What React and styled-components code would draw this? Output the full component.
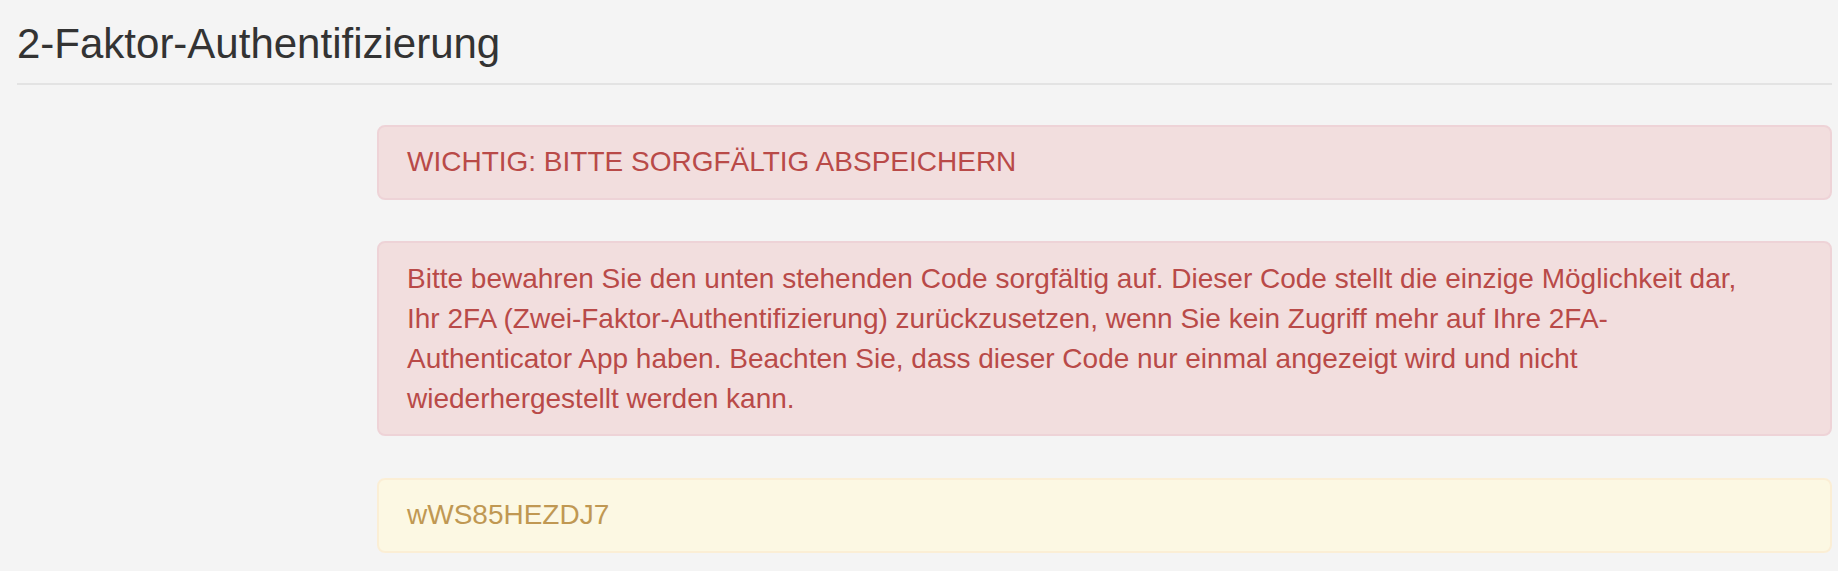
import React from 'react'
import styled, { createGlobalStyle } from 'styled-components'

const GlobalStyle = createGlobalStyle`
  html, body {
    margin: 0;
    padding: 0;
    background: #f4f4f4;
  }

  body {
    font-family: "Liberation Sans", Arial, Helvetica, sans-serif;
    font-size: 28px;
    line-height: 40px;
    color: #333333;
  }
`

const alertColors = {
  danger: { bg: '#f2dede', border: '#eed3d7', text: '#b94a48' },
  warning: { bg: '#fcf8e3', border: '#fbeed5', text: '#c09853' }
}

const PageStyled = styled.div`
  padding: 0 6px 0 17px;
`

const PageHeader = styled.h1`
  margin: 21px 0 0;
  padding-bottom: 15.5px;
  border-bottom: 2px solid #e3e3e3;
  font-size: 42px;
  font-weight: 400;
  line-height: 46px;
  color: #333333;
`

const Row = styled.div`
  display: grid;
  grid-template-columns: 360px 1fr;
  margin-top: 40px;
`

const Content = styled.div`
  grid-column: 2;
  display: flex;
  flex-direction: column;
  gap: 41.5px;
`

const Alert = styled.div`
  padding: 15.5px 70px 15.5px 28px;
  border: 2px solid ${p => alertColors[p.$variant].border};
  border-radius: 8px;
  background: ${p => alertColors[p.$variant].bg};
  color: ${p => alertColors[p.$variant].text};
  font-size: 28px;
  line-height: 40px;
`

const App = () => {
  return (
    <>
      <GlobalStyle />
      <PageStyled>
        <PageHeader>2-Faktor-Authentifizierung</PageHeader>
        <Row>
          <Content>
            <Alert $variant="danger">WICHTIG: BITTE SORGFÄLTIG ABSPEICHERN</Alert>
            <Alert $variant="danger">
              Bitte bewahren Sie den unten stehenden Code sorgfältig auf. Dieser Code stellt die einzige
              Möglichkeit dar, Ihr 2FA (Zwei-Faktor-Authentifizierung) zurückzusetzen, wenn Sie kein
              Zugriff mehr auf Ihre 2FA-Authenticator App haben. Beachten Sie, dass dieser Code nur
              einmal angezeigt wird und nicht wiederhergestellt werden kann.
            </Alert>
            <Alert $variant="warning">wWS85HEZDJ7</Alert>
          </Content>
        </Row>
      </PageStyled>
    </>
  )
}

export default App
